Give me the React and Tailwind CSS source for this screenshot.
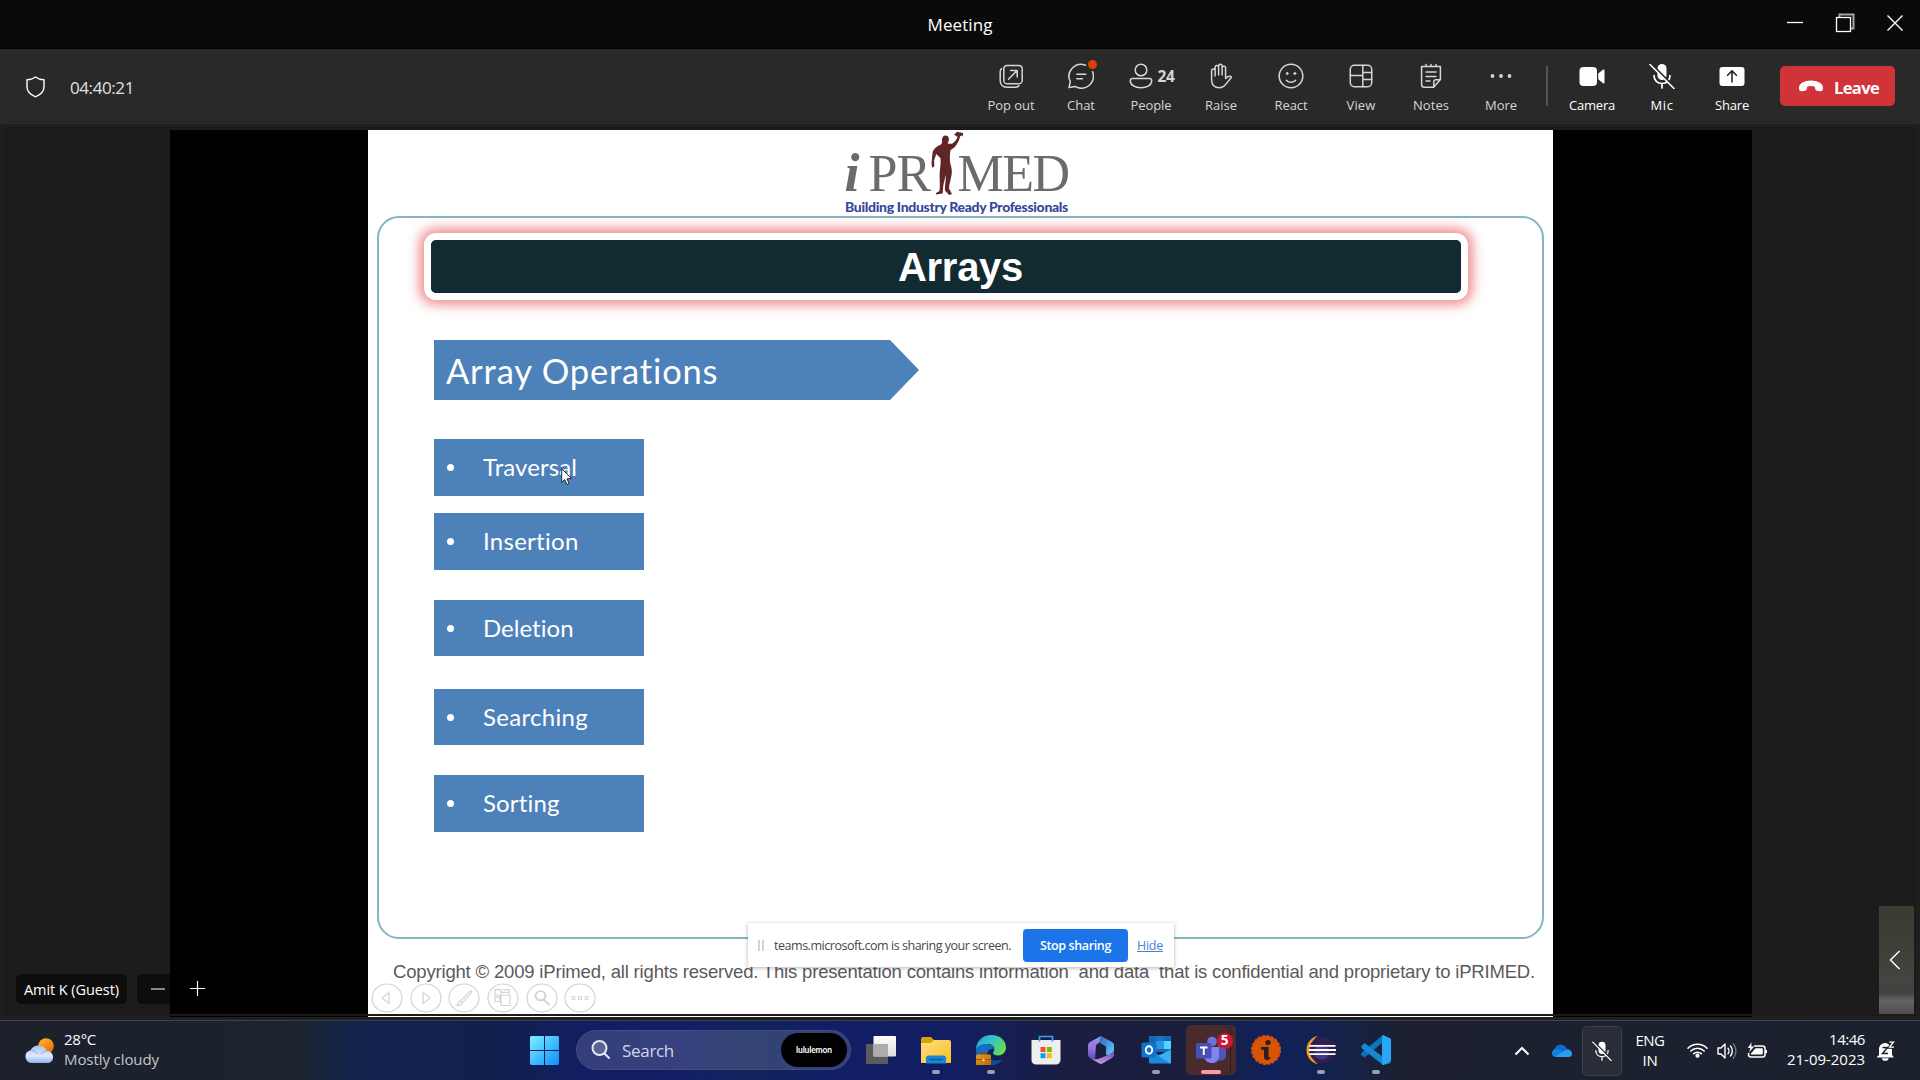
import React, { useLayoutEffect, useRef, useState } from "react";

/* Text whose letter spacing is adjusted so that the line takes `w` pixels. */
function Fit({ w, className = "", children }) {
  const ref = useRef(null);
  const [spacing, setSpacing] = useState(0);
  useLayoutEffect(() => {
    const natural = ref.current.getBoundingClientRect().width;
    setSpacing((w - natural) / children.length);
  }, [w, children]);
  return (
    <span ref={ref} className={`inline-block whitespace-pre ${className}`} style={{ letterSpacing: `${spacing}px` }}>
      {children}
    </span>
  );
}

const Line = ({ size = 26, width = 1.5, children, vb = "0 0 26 26" }) => (
  <svg width={size} height={size} viewBox={vb} fill="none" stroke="currentColor" strokeWidth={width} strokeLinecap="round" strokeLinejoin="round">
    {children}
  </svg>
);

const icons = {
  popout: (
    <Line>
      <rect x="5.800" y="2.400" width="18.400" height="18.400" rx="3.400" />
      <path d="M3.600 5.600C2.600 6.300 2.200 7.400 2.200 8.600v9c0 4 2.600 6.600 6.600 6.600h9c1.300 0 2.400-.5 3.100-1.500M10.500 16.200l8.300-8.400M12.600 7.400h6.600v6.600" />
    </Line>
  ),
  chat: (
    <Line>
      <path d="M17.500 2.200A12 12 0 0 0 2.300 18.700L1 24.600l6-1.200A12 12 0 0 0 24.600 8.800M8.800 11.200h9M8.800 15.800h5.600" />
    </Line>
  ),
  raise: (
    <Line>
      <path d="M3.600 17V7.700a1.750 1.750 0 0 1 3.500 0V13M7.100 12V4.200a1.750 1.750 0 0 1 3.500 0V12M10.600 11V3a1.750 1.750 0 0 1 3.500 0v9M14.100 12V5a1.750 1.750 0 0 1 3.500 0v10.600c1.300-1.700 2.900-2.600 4.400-2.400 1.100.2 1.600 1 .9 1.800l-5.400 6.600c-1.700 2.200-3.300 3.200-6 3.200-5 0-7.900-2.800-7.900-7.800" />
    </Line>
  ),
  react: (
    <Line>
      <circle cx="13" cy="13" r="11.800" />
      <path d="M8.400 17.200c2.500 2.800 6.700 2.800 9.200 0" />
      <circle cx="9.200" cy="10.500" r="1" fill="currentColor" strokeWidth="1" />
      <circle cx="16.800" cy="10.500" r="1" fill="currentColor" strokeWidth="1" />
    </Line>
  ),
  view: (
    <Line>
      <rect x="2.300" y="2.300" width="21.400" height="21.400" rx="4" />
      <path d="M14.800 2.300v21.400M2.300 12.500h12.500M14.800 9.500h8.900M14.800 16.500h8.900" />
    </Line>
  ),
  notes: (
    <Line>
      <path d="M3.600 3.600h18.800v13l-6.800 7.600H6.400a2.800 2.800 0 0 1-2.800-2.800zM22.400 16.800h-4.600a2 2 0 0 0-2 2v5.200M8 1.500v2M13 1.500v2M18 1.500v2M8 9h10M8 13.500h10M8 18h4" />
    </Line>
  ),
  more: (
    <Line>
      <g fill="currentColor" stroke="none">
        <circle cx="4.500" cy="13" r="1.900" />
        <circle cx="13" cy="13" r="1.900" />
        <circle cx="21.500" cy="13" r="1.900" />
      </g>
    </Line>
  ),
  camera: (
    <Line>
      <g fill="currentColor" stroke="none">
        <rect x="0.500" y="4" width="17.500" height="19" rx="4" />
        <path d="M19.200 10.500l4.600-3.800c.8-.6 1.700-.2 1.700.7v12c0 .9-.9 1.300-1.700.7l-4.600-3.800z" />
      </g>
    </Line>
  ),
  share: (
    <Line>
      <rect x="0.500" y="4" width="25" height="19" rx="3" fill="currentColor" stroke="none" />
      <path d="M13 19V8.200M8.600 12.300L13 7.900l4.400 4.400" stroke="#292929" strokeWidth="1.600" />
    </Line>
  ),
};

function MicOff({ size = 26, bg = "#292929" }) {
  return (
    <svg width={size} height={size} viewBox="0 0 26 26" fill="none" strokeLinecap="round">
      <rect x="8.500" y="1" width="9" height="16" rx="4.500" fill="white" />
      <path d="M5 12.500c0 5 3.500 8 8 8s8-3 8-8M13 20.500V25" stroke="white" strokeWidth="1.700" />
      <path d="M2 .5L26 24.500" stroke={bg} strokeWidth="1.800" />
      <path d="M1 1.500L25 25.500" stroke="white" strokeWidth="1.600" />
    </svg>
  );
}

function Tool({ icon, label, w, bright }) {
  return (
    <div className={`flex w-[70px] flex-col items-center pt-[14px] ${bright ? "text-white" : "text-[#d6d6d6]"}`}>
      <div className="h-[26px]">{icon}</div>
      <div className="mt-[7px] h-[18px] text-[13px] leading-[18px]">
        <Fit w={w}>{label}</Fit>
      </div>
    </div>
  );
}

function TitleBar() {
  return (
    <header className="grid h-[49px] grid-cols-[1fr_auto_1fr] border-b border-black bg-[#0a0a0a] text-white">
      <div />
      <div className="pt-[12px] text-[17px] leading-[25px]">
        <Fit w={65}>Meeting</Fit>
      </div>
      <div className="flex justify-end pr-[16px] pt-[13px]">
        <svg className="mr-[31px]" width="18" height="20" fill="none" stroke="white" strokeWidth="1.300"><path d="M1 9.500h16" /></svg>
        <svg className="mr-[31px]" width="20" height="20" fill="none" stroke="white" strokeWidth="1.300">
          <path d="M4.500 4V1.500h14v14H16" stroke="#a8a8a8" strokeWidth="2" />
          <rect x="1.500" y="4.500" width="14" height="14" />
        </svg>
        <svg width="18" height="20" fill="none" stroke="white" strokeWidth="1.400"><path d="M1.500 2.500l15 15M16.500 2.500l-15 15" /></svg>
      </div>
    </header>
  );
}

function Toolbar() {
  return (
    <div className="flex h-[75px] bg-[#292929]">
      <div className="flex flex-1 items-start pl-[26px]">
        <svg className="mt-[27px]" width="20" height="22" viewBox="0 0 20 22" fill="none" stroke="white" strokeWidth="1.400" strokeLinejoin="round">
          <path d="M9.500 1c2.400 1.800 5 2.700 8.500 2.800v7c0 5-3.400 8-8.500 10C4.400 18.800 1 15.800 1 10.800v-7C4.500 3.700 7.100 2.800 9.500 1z" />
        </svg>
        <div className="ml-[24px] mt-[26px] text-[17px] leading-[25px] text-[#e0e0e0]">
          <Fit w={64}>04:40:21</Fit>
        </div>
      </div>
      <Tool label="Pop out" w={47} icon={icons.popout} />
      <Tool
        label="Chat"
        w={28}
        icon={
          <div className="relative">
            {icons.chat}
            <span className="absolute -right-[3px] -top-[3px] size-[9px] rounded-full bg-[#dc3e04]" />
          </div>
        }
      />
      <Tool
        label="People"
        w={41}
        icon={
          <div className="flex items-center gap-[4px]">
            <Line>
              <circle cx="13" cy="7" r="5.800" />
              <path d="M4.500 15.500h17c1.300 0 2.200.9 2.200 2.200 0 4.500-4.700 7-10.700 7s-10.700-2.500-10.700-7c0-1.300.9-2.200 2.200-2.200z" />
            </Line>
            <span className="text-[15.500px] font-bold leading-[26px]"><Fit w={17}>24</Fit></span>
          </div>
        }
      />
      <Tool label="Raise" w={32} icon={icons.raise} />
      <Tool label="React" w={33} icon={icons.react} />
      <Tool label="View" w={29} icon={icons.view} />
      <Tool label="Notes" w={36} icon={icons.notes} />
      <Tool label="More" w={32} icon={icons.more} />
      <div className="ml-[10px] mr-[9px] mt-[17px] h-[40px] w-[2px] bg-[#555555]" />
      <Tool bright label="Camera" w={46} icon={icons.camera} />
      <Tool bright label="Mic" w={23} icon={<MicOff />} />
      <Tool bright label="Share" w={34} icon={icons.share} />
      <button className="ml-[13px] mr-[25px] mt-[17px] flex h-[40px] w-[115px] items-center gap-[10px] rounded-[5px] bg-[#d13438] pl-[18px] text-[16.500px] font-bold text-white">
        <svg width="26" height="12" viewBox="0 0 26 12">
          <path d="M13 .5c6.500 0 12 2.800 12 7.500 0 2.400-1 3.600-3.200 3.200l-2.700-.5c-1.300-.3-1.900-1-2-2.200l-.2-1.800c-2.500-.8-5.300-.8-7.800 0l-.2 1.800c-.1 1.200-.7 1.900-2 2.200l-2.700.5C2 11.600 1 10.400 1 8 1 3.300 6.500.5 13 .5z" fill="white" />
        </svg>
        <Fit w={45} className="mt-[4px]">Leave</Fit>
      </button>
    </div>
  );
}

function Logo() {
  return (
    <div className="flex h-[86px] flex-col items-center pr-[8px]">
      <div className="flex h-[68px] w-[224px] items-end font-[Liberation_Serif,serif] text-[52px] leading-[49px] text-[#6c6b6c]">
        <span className="w-[24px] text-[54px] font-bold italic">
          <Fit w={17}>i</Fit>
        </span>
        <Fit w={62}>PR</Fit>
        <svg width="32" height="66" viewBox="0 0 32 63" preserveAspectRatio="none" className="relative z-10 mb-[1px] shrink-0" fill="#602626">
          <path d="M11 8.500c0-2.700 1.300-4.300 3.500-4.300s3.600 1.600 3.400 4c-.1 1.500-.6 2.600-1.400 3.500 1.500.6 3.500.8 5 .3 2.400-1.700 4.300-4 5-6.500l-3.400-2L26 .8l6 1.200 1 2.500-.6 2-1-2.200-2.200.4c-.8 4-3.200 8.100-5.700 10.700-1.600 1.200-3.300 2-4.100 3.200-.6 4-.8 8.500-.1 12.500 1.200 3.500 2 7 1.200 11-.6 4.200-2.300 8.500-2.500 12.800l3 5.300-2.900.8-4.200-4.300c-.2-5 1.200-10 .9-14.600l-2.200 8.500c-.7 3.500-.5 6-.9 9l-6.500 1-.4-1.200 3.600-2.200c1-6-.1-12 .3-17.500.3-5 1.400-9 .7-14L5.300 22l-2.200 6 .2 6-2 1L.5 31l1-10c.8-3.500 4-6.500 8.500-8 .9-.9 1.300-2.800 1-4.500z" />
        </svg>
        <Fit w={111} className="-ml-[5px]">MED</Fit>
      </div>
      <div className="font-[Lato,sans-serif] text-[14px] font-black leading-[17px] text-[#38479a]">
        <Fit w={223}>Building Industry Ready Professionals</Fit>
      </div>
    </div>
  );
}

function Item({ label, w, className }) {
  return (
    <li className={`flex w-[210px] items-center bg-[#4d81ba] pl-[13px] text-[24px] leading-[30px] text-white ${className}`}>
      <span className="size-[7px] rounded-full bg-white" />
      <Fit w={w} className="-mt-[1px] ml-[29px]">{label}</Fit>
    </li>
  );
}

const controls = [
  <path key="a" d="M18 10l-7 6 7 6z" />,
  <path key="b" d="M13 10l7 6-7 6z" />,
  <path key="c" d="M8.500 23.500c2-.4 1.500-3.500 4-4.500l10-11 1.500 1.500-9.500 11.500c-.5 2.500-3.500 3.500-6 2.500zM12.500 19l2 2" />,
  <path key="d" d="M8 7h6v6H8zM16 7h6v5M8 15h5v5H8zM14 13h9v11h-9zM14 10h8" />,
  <path key="e" d="M14.500 8.500a5 5 0 1 0 .1 0zM18 18l5.500 5.500" strokeWidth="1.800" />,
  <path key="f" d="M8 14.500v3h3v-3zM14.500 14.500v3h3v-3zM21 14.500v3h3v-3z" strokeWidth="1" />,
];

function Slide() {
  return (
    <div className="relative ml-[198px] flex w-[1185px] flex-col bg-white">
      <Logo />
      <section className="mx-[9px] h-[723px] rounded-[22px] border-2 border-[#83b6c1] px-[45px] pt-[15px]">
        <div className="h-[67px] w-[1044px] rounded-[12px] border-[7px] border-white bg-[#112b31] shadow-[0_0_12px_5px_rgba(236,125,125,0.85)]">
          <div className="flex h-full items-center justify-center rounded-[6px] bg-[#112b31] pl-[29px] font-[Liberation_Sans,sans-serif] text-[40px] font-bold leading-none text-white">
            <Fit w={125}>Arrays</Fit>
          </div>
        </div>
        <div className="ml-[10px] mt-[40px] flex h-[60px] w-[485px] items-center bg-[#4d81ba] pl-[12px] font-[Lato,sans-serif] text-[34.500px] text-white [clip-path:polygon(0_0,456px_0,100%_50%,456px_100%,0_100%)]">
          <Fit w={273} className="mt-[1px]">Array Operations</Fit>
        </div>
        <ul className="ml-[10px] mt-[39px] font-[Lato,sans-serif]">
          <Item label="Traversal" w={94} className="h-[57px]" />
          <Item label="Insertion" w={96} className="mt-[17px] h-[57px]" />
          <Item label="Deletion" w={91} className="mt-[30px] h-[56px]" />
          <Item label="Searching" w={105} className="mt-[33px] h-[56px]" />
          <Item label="Sorting" w={77} className="mt-[30px] h-[57px]" />
        </ul>
      </section>
      <div className="ml-[25px] mt-[20px] h-[25px] font-[Liberation_Sans,sans-serif] text-[18.500px] leading-[25px] text-[#5a5a5c]">
        <Fit w={1142}>{"Copyright © 2009 iPrimed, all rights reserved. This presentation contains information  and data  that is confidential and proprietary to iPRIMED."}</Fit>
      </div>
      <div className="ml-[3px] -mt-[1px] flex gap-[6.700px]">
        {controls.map((c, i) => (
          <svg key={i} width="32" height="30" viewBox="0 0 32 32" preserveAspectRatio="none" fill="none" stroke="#d2d2d2" strokeWidth="1.200">
            <circle cx="16" cy="16" r="15" />
            {c}
          </svg>
        ))}
      </div>

      {/* mouse pointer of the presenter */}
      <svg className="absolute left-[193px] top-[338px]" width="12" height="18" viewBox="0 0 12 18">
        <path d="M.7.8v13.500l3-2.700 2.200 5 2.200-1-2.100-4.800 4.600-.3z" fill="white" stroke="#1b2a3d" strokeWidth="1" />
      </svg>

      {/* browser notice floating over the slide */}
      <div className="absolute left-[380px] top-[793px] flex h-[44px] w-[426px] items-center bg-white pt-[1px] font-[Open_Sans,sans-serif] text-[12.500px] shadow-[0_1px_4px_rgba(0,0,0,0.3)]">
        <div className="ml-[10px] h-[11px] w-[6px] border-x-2 border-[#d4d4d4]" />
        <Fit w={237} className="ml-[10px] mt-[1px] text-[#45484c]">teams.microsoft.com is sharing your screen.</Fit>
        <button className="ml-[12px] h-[33px] w-[105px] rounded-[4px] bg-[#1b74e8] pt-[1px] font-semibold text-white">
          <Fit w={71}>Stop sharing</Fit>
        </button>
        <Fit w={26} className="ml-[9px] mt-[1px] text-[#4a7fd0] underline">Hide</Fit>
      </div>
    </div>
  );
}

function Stage() {
  return (
    <main className="relative h-[896px] bg-[#1f1f1f] pt-[3px]">
      <div className="mx-[4px] flex h-[889px] border border-[#191919] bg-[#1c1c1c] pl-[165px] pt-[2px]">
        <div className="flex h-[884px] w-[1582px] bg-black">
          <Slide />
        </div>
      </div>
      <div className="absolute bottom-[3px] left-[170px] flex h-px w-[1582px] bg-black">
        <div className="ml-[198px] w-[1185px] bg-white" />
      </div>

      {/* name tag and zoom controls */}
      <div className="absolute left-[16px] top-[850px] flex h-[30px] items-center text-[14.500px] font-medium text-white">
        <div className="flex h-full w-[111px] items-center justify-center rounded-[5px] bg-[#0d0d0d] pt-[1px]">
          <Fit w={95}>Amit K (Guest)</Fit>
        </div>
        <div className="ml-[10px] flex h-full w-[33px] items-center rounded-l-[5px] bg-[#0d0d0d] pl-[14px]">
          <div className="h-[2px] w-[14px] bg-[#878787]" />
        </div>
        <svg className="-mt-[1px] ml-[20px]" width="15" height="15" stroke="white" strokeWidth="1.200"><path d="M7.500 0v15M0 7.500h15" /></svg>
      </div>

      {/* own video, folded away */}
      <div className="absolute left-[1879px] top-[782px] flex h-[108px] w-[35px] items-center justify-start bg-[linear-gradient(180deg,#393c31_0%,#3d3f38_35%,#444440_65%,#434241_80%,#656364_88%,#5a585a_94%,#4c4b52_100%)] pl-[10px]">
        <svg width="12" height="20" fill="none" stroke="white" strokeWidth="1.500"><path d="M10.500 1L1.500 10l9 9" /></svg>
      </div>
    </main>
  );
}

function AppSlot({ children, dot, className = "" }) {
  return (
    <div className={`flex h-[50px] w-[55px] flex-col items-center ${className}`}>
      <div className="flex h-[50px] items-center">{children}</div>
      <div className={`-mt-[5px] h-[4px] shrink-0 rounded-full ${dot === "active" ? "w-[20px] bg-[#ff99a4]" : dot ? "w-[8px] bg-[#9a9db2]" : "w-0"}`} />
    </div>
  );
}

const Svg = ({ children, vb = "0 0 30 30" }) => (
  <svg width="30" height="30" viewBox={vb}>{children}</svg>
);

function Apps() {
  return (
    <div className="flex pt-[4px]">
      <AppSlot>
        <Svg>
          <defs>
            <linearGradient id="tvA" x1="0" y1="0" x2="0" y2="1"><stop offset="0" stopColor="#fff" /><stop offset="1" stopColor="#dcdcdc" /></linearGradient>
          </defs>
          <rect x="0" y="9" width="22" height="20" rx="1" fill="#5b5b5b" />
          <rect x="7.500" y="1" width="22.500" height="20.500" rx="1" fill="url(#tvA)" />
          <path d="M7.500 9H22v12.500H7.500z" fill="#acacac" />
        </Svg>
      </AppSlot>
      <AppSlot dot>
        <Svg>
          <defs>
            <linearGradient id="fxA" x1="0" y1="0" x2="1" y2="1"><stop offset="0" stopColor="#ffe083" /><stop offset="1" stopColor="#fbbd21" /></linearGradient>
          </defs>
          <path d="M0 4a2 2 0 0 1 2-2h8l3.500 3.500H20V12H0z" fill="#dd9f0c" />
          <path d="M0 8h10l3-3h15a2 2 0 0 1 2 2v21H0z" fill="url(#fxA)" />
          <path d="M5 28.500V23a2.500 2.500 0 0 1 2.500-2.500h15A2.500 2.500 0 0 1 25 23v5.500z" fill="#1787d4" />
          <path d="M9 24.500h12" stroke="#0b5a9c" strokeWidth="1.400" strokeLinecap="round" />
        </Svg>
      </AppSlot>
      <AppSlot dot>
        <Svg>
          <defs>
            <linearGradient id="edA" x1="0" y1="0.200" x2="1" y2="0.600"><stop offset="0" stopColor="#2aa7dc" /><stop offset="0.500" stopColor="#35c4c4" /><stop offset="1" stopColor="#66e04c" /></linearGradient>
            <linearGradient id="bgA" x1="0" y1="0" x2="1" y2="1"><stop offset="0" stopColor="#e69b24" /><stop offset="1" stopColor="#b96a05" /></linearGradient>
          </defs>
          <path d="M0 15C0 6 7 0 15.500 0 24 0 30 5.500 30 12.500c0 5-3.800 8-8 8-3 0-5-1-5-2.500 0-1 1.300-1.500 1.300-4 0-3-3-5-7-5C5.500 9 1.500 11.500 0 15z" fill="url(#edA)" />
          <path d="M0 15c1.500-3.700 5-6 10-6 4.500 0 8 2.300 8.300 5-4-1.500-8 2-7 7 1 5.500 7 8.500 15 3.500-3 4-7 5.500-11.300 5.500C6 30 0 23.500 0 15z" fill="#1271c6" />
          <path d="M12 17c-1.500 6 6 11 14.500 7l-3 3.500c-3 2.300-7 2.500-9 2.500z" fill="#0c4d93" />
          <rect x="0" y="19.500" width="15" height="10.500" rx="1" fill="url(#bgA)" />
          <path d="M5 19.500V18h5v1.500" stroke="#8d4c03" strokeWidth="1.400" fill="none" />
          <path d="M0 24.500h15" stroke="#8d4c03" strokeWidth=".8" />
          <circle cx="7.500" cy="25" r="1.200" fill="#ffe08a" />
        </Svg>
      </AppSlot>
      <AppSlot>
        <Svg>
          <path d="M8.500 6.500V1.500h13v5" fill="none" stroke="#29a8ea" strokeWidth="1.700" />
          <path d="M.5 5h29v20a4.500 4.500 0 0 1-4.500 4.500H5A4.500 4.500 0 0 1 .5 25z" fill="#eeeeee" />
          <path d="M8.500 6.500V5M21.500 6.500V5" stroke="#29a8ea" strokeWidth="1.700" />
          <path d="M9.500 12h5v5h-5z" fill="#f25022" />
          <path d="M15.800 12h5v5h-5z" fill="#7fba00" />
          <path d="M9.500 18.200h5v5h-5z" fill="#00a4ef" />
          <path d="M15.800 18.200h5v5h-5z" fill="#ffb900" />
        </Svg>
      </AppSlot>
      <AppSlot>
        <Svg>
          <defs>
            <linearGradient id="mA" x1="0" y1="0" x2="0" y2="1"><stop offset="0" stopColor="#7f9fee" /><stop offset="0.500" stopColor="#a06fdc" /><stop offset="1" stopColor="#3f4fb5" /></linearGradient>
            <linearGradient id="mB" x1="0" y1="0" x2="1" y2="1"><stop offset="0" stopColor="#305fc4" /><stop offset="1" stopColor="#5fd8f8" /></linearGradient>
            <linearGradient id="mC" x1="0" y1="1" x2="1" y2="0"><stop offset="0" stopColor="#d9a4f2" /><stop offset="1" stopColor="#6c4bb0" /></linearGradient>
          </defs>
          <path d="M15 1L4 7c-1.300.8-2 2-2 3.500v9C2 21 2.700 22.300 4 23l5 2.500L10 10l6-4.500z" fill="url(#mA)" />
          <path d="M15 1c-1.500 3-2 5.500 0 7.500l5 3v8l6 2c1.300-.8 2-2 2-3.500v-7.500C28 9 27.300 7.700 26 7z" fill="url(#mB)" />
          <path d="M4 23l9.500 5.500c1 .6 2 .6 3 0L26 23c1.300-.8 2-2 2-3.500V15c-1 3-6 5-12 7.500-5 2.300-9 2.500-12 .5z" fill="url(#mC)" />
          <path d="M15 9.500l5 3v6L15 21.500l-5-3v-6z" fill="#1a1f40" />
        </Svg>
      </AppSlot>
      <AppSlot dot>
        <Svg>
          <path d="M8 2a1 1 0 0 1 1-1h20a1 1 0 0 1 1 1v15H8z" fill="#1467b5" />
          <path d="M15 6h8v8h-8z" fill="#2997dc" />
          <path d="M23 6h7v8h-7z" fill="#50d5ff" />
          <path d="M15 1h8v5h-8z" fill="#1a73c2" />
          <path d="M8 13l11 8 11-8v14a1.500 1.500 0 0 1-1.500 1.500h-19A1.500 1.500 0 0 1 8 27z" fill="#1b8ad8" />
          <path d="M30 15v12a1.500 1.500 0 0 1-1.500 1.500L17 20.500z" fill="#3aaef0" />
          <rect x="0.500" y="7.500" width="15" height="15" rx="1.500" fill="#0f74cf" />
          <ellipse cx="8" cy="15" rx="3.200" ry="3.700" fill="none" stroke="white" strokeWidth="1.900" />
        </Svg>
      </AppSlot>
      <div className="relative flex w-[55px] justify-center">
        <div className="absolute left-[3px] top-0 h-[50px] w-[50px] rounded-[5px] bg-[#4a2a2d]" />
        <div className="absolute left-[3px] top-0 h-[50px] w-[45px] rounded-[5px] border-r border-[#2b1c26]" />
        <div className="relative">
          <AppSlot dot="active">
            <div className="relative">
              <Svg>
                <circle cx="16" cy="6.500" r="4.800" fill="#6d73d8" />
                <circle cx="25" cy="9" r="3.400" fill="#4b51b8" />
                <path d="M21 12h9v8c0 3.500-2 5.500-5 5.500h-4z" fill="#4e55bf" />
                <path d="M8 12h15v8.500c0 5-3 7.500-7 7.500s-8-2.500-8-7.500z" fill="#7d85ee" />
                <rect x="0" y="8" width="15.500" height="15.500" rx="1.500" fill="#484fb5" />
                <path d="M4 12.500h7.500M7.750 12.500v7.500" stroke="white" strokeWidth="1.900" />
              </Svg>
              <span className="absolute -right-[7px] -top-[2px] flex size-[16px] items-center justify-center rounded-full bg-[#cd1637] text-[13.500px] font-bold leading-none text-white">5</span>
            </div>
          </AppSlot>
        </div>
      </div>
      <AppSlot>
        <Svg>
          <circle cx="15" cy="15" r="14" fill="#d75404" />
          <circle cx="15" cy="15" r="14" fill="none" stroke="#d75404" strokeWidth="2" strokeDasharray="3 1.400" />
          <circle cx="17" cy="7.500" r="2.600" fill="#2d1d22" />
          <path d="M10 12h7.500v9.500c0 1.200.8 1.200 2 .5v1.500c-2.500 2.300-6.500 2-6.500-1.500v-7l-3-.5z" fill="#2d1d22" />
        </Svg>
      </AppSlot>
      <AppSlot dot>
        <Svg>
          <path d="M12 .8A14.500 14.500 0 0 0 12 29.200 17 17 0 0 1 12 .8z" fill="#f29422" />
          <circle cx="16.500" cy="15" r="13.200" fill="#2e2150" />
          <circle cx="15.500" cy="17" r="7.500" fill="#473787" />
          <path d="M3.300 10.800h26.200M2.700 15h27.300M3.300 19.200h26.200" stroke="white" strokeWidth="1.800" />
        </Svg>
      </AppSlot>
      <AppSlot dot>
        <Svg>
          <path d="M22 0l-1 8L3.500 22.500 0 19.800v-1.600z" fill="#0a74be" />
          <path d="M0 11.500L3.500 8 30 28l-8 2L1 13.500z" fill="#1787cf" />
          <path d="M22 0l7 3.200c.6.300 1 .8 1 1.500v20.600c0 .7-.4 1.200-1 1.500L22 30c-.6-.2-1-.6-1-1V1c0-.4.400-.8 1-1z" fill="#29a7f5" />
        </Svg>
      </AppSlot>
    </div>
  );
}

function Tray() {
  return (
    <div className="flex flex-1 items-center justify-end text-[15px] leading-[20px] text-white">
      <svg width="16" height="10" fill="none" stroke="white" strokeWidth="2"><path d="M1.500 8.500L8 2l6.500 6.500" /></svg>
      <svg className="ml-[22px]" width="20" height="14" viewBox="0 0 20 14">
        <path d="M4.500 12.500A4 4 0 0 1 2.500 5 6.500 6.500 0 0 1 14.500 4.500c3 .2 5 2 5 4z" fill="#0b6fcf" />
        <path d="M0 9.500C0 7 2 5 4.500 5c2 0 3.500 1 6 2.500L17 13H4C1.500 13 0 11.500 0 9.500z" fill="#1481dc" />
        <path d="M3 12.900L12 7c3-2 8-.5 8 3 0 2-1.500 3-3.500 3H4z" fill="#29a0ee" />
      </svg>
      <div className="ml-[10px] flex h-[50px] w-[40px] items-center justify-center rounded-[5px] border border-[#3b4049] bg-[#282d38]">
        <MicOff size={20} bg="#282d38" />
      </div>
      <div className="-mt-[2px] ml-[13px] flex w-[30px] flex-col items-center">
        <Fit w={29}>ENG</Fit>
        <Fit w={15}>IN</Fit>
      </div>
      <svg className="ml-[22px] mt-[-2px]" width="21" height="16" fill="none" stroke="white" strokeWidth="1.600" strokeLinecap="round">
        <path d="M1 6.200c5.300-5.300 13.700-5.300 19 0M3.800 9c3.700-3.700 9.700-3.700 13.400 0M6.700 11.700c2.100-2 5.500-2 7.600 0" />
        <circle cx="10.500" cy="13.700" r="1.300" fill="white" />
      </svg>
      <svg className="ml-[9px]" width="21" height="18" fill="none" stroke="white" strokeWidth="1.400" strokeLinejoin="round" strokeLinecap="round">
        <path d="M1 6v6h3l4 4V2L4 6zM11 6.200c1.300 1.500 1.300 4.100 0 5.600M13.500 4c2.400 2.800 2.400 7.200 0 10" />
        <path d="M16.300 1.800c3.500 4 3.500 10.400 0 14.400" stroke="#6f747d" />
      </svg>
      <svg className="ml-[9px]" width="21" height="18" viewBox="0 0 21 18" fill="none" stroke="white" strokeWidth="1.500">
        <path d="M7 4h8.500a2.500 2.500 0 0 1 2.500 2.500v6a2.500 2.500 0 0 1-2.500 2.500H4a2.500 2.500 0 0 1-2.500-2.500V11" />
        <path d="M8.500 6.300h6.500c.5 0 .8.300.8.800v4.700c0 .5-.3.800-.8.800H4.500c-.5 0-.8-.3-.8-.8z" fill="white" stroke="none" />
        <path d="M19 8v3.200" strokeWidth="2" />
        <path d="M4.500.3L.8 6h2.700L2 10.300 7.300 4.500H4.300z" fill="white" stroke="none" />
      </svg>
      <div className="-mt-[3px] ml-[19px] mr-[1px] flex w-[78px] flex-col items-end">
        <Fit w={36}>14:46</Fit>
        <Fit w={78}>21-09-2023</Fit>
      </div>
      <svg className="ml-[11px] mr-[25px]" width="18" height="20" viewBox="0 0 18 20">
        <path d="M2 14V8a6 6 0 0 1 9.500-4.800L15 8v6l1.500 1.800v.7H0v-.7z" fill="white" />
        <path d="M5 17.300h6.500a3.200 2.500 0 0 1-6.500 0z" fill="white" />
        <path d="M12.300 1.200h4.200l-4 5h4.500" fill="none" stroke="#1b222d" strokeWidth="3" />
        <path d="M12.300 1.200h4.200l-4 5h4.500" fill="none" stroke="white" strokeWidth="1.300" />
        <path d="M5.500 6.500h5l-5 6h5.500" fill="none" stroke="#1b222d" strokeWidth="1.500" />
      </svg>
    </div>
  );
}

function Taskbar() {
  return (
    <footer className="flex h-[60px] border-t border-[#3e424d] bg-[linear-gradient(90deg,#1c212c_0px,#1c232e_300px,#11234b_350px,#10214f_500px,#111e63_590px,#121f66_690px,#10245a_750px,#111e66_830px,#121e62_950px,#1b1e40_1070px,#1a1e3c_1180px,#10215a_1270px,#14214e_1330px,#1c2031_1400px,#1b222d_1920px)]">
      <div className="flex w-[530px] items-start pl-[24px] pt-[8px] text-[15px] leading-[20px]">
        <svg className="mt-[8px]" width="32" height="28" viewBox="0 0 32 28">
          <defs>
            <linearGradient id="sun" x1="0" y1="0" x2="0.600" y2="1"><stop offset="0" stopColor="#ffc024" /><stop offset="1" stopColor="#ee6a0d" /></linearGradient>
            <linearGradient id="cld" x1="0" y1="0" x2="0" y2="1"><stop offset="0" stopColor="#a8c3f5" /><stop offset="0.600" stopColor="#dfe9fb" /><stop offset="1" stopColor="#8fb0ee" /></linearGradient>
          </defs>
          <circle cx="22" cy="9" r="7.800" fill="url(#sun)" />
          <path d="M7.500 26a6.500 6.500 0 0 1-1-12.800A9 9 0 0 1 22.800 14 6.200 6.200 0 0 1 25 26z" fill="url(#cld)" />
          <path d="M6.500 13.200c3.500-.4 6 1.500 7 4M22.800 14c-3 0-5 1.200-6 3.200" fill="none" stroke="#8ca8e4" strokeWidth="1" />
        </svg>
        <div className="ml-[8px] flex flex-col items-start">
          <Fit w={32} className="text-white">28°C</Fit>
          <Fit w={95} className="text-[#c3c5c9]">Mostly cloudy</Fit>
        </div>
      </div>
      <svg className="mt-[15px]" width="29" height="29">
        <defs>
          <linearGradient id="win" gradientUnits="userSpaceOnUse" x1="0" y1="0" x2="29" y2="29"><stop offset="0" stopColor="#7df1ff" /><stop offset="1" stopColor="#0b8dfd" /></linearGradient>
        </defs>
        <path d="M1 0h13v14H0V1zM15 0h13l1 1v13H15zM0 15h14v14H1l-1-1zM15 15h14v13l-1 1H15z" fill="url(#win)" />
      </svg>
      <div className="ml-[17px] mt-[9px] flex h-[40px] w-[275px] items-center rounded-full border border-[#454d7f] bg-white/15 pl-[14px] pr-[3px]">
        <svg width="19" height="20" fill="none" stroke="#e4e6f0" strokeWidth="2" strokeLinecap="round">
          <circle cx="8.500" cy="8" r="7" fill="#5a6494" /><path d="M13.500 13.500l4.500 4.500" />
        </svg>
        <Fit w={52} className="ml-[12px] mt-[1px] text-[17px] text-[#d3d6e6]">Search</Fit>
        <div className="ml-auto flex h-[34px] w-[66px] items-center justify-center rounded-full bg-black font-[Lato,sans-serif] text-[8.500px] font-bold text-white">
          <Fit w={36}>lululemon</Fit>
        </div>
      </div>
      <div className="ml-[2px]">
        <Apps />
      </div>
      <Tray />
    </footer>
  );
}

export default function App() {
  return (
    <div className="flex h-[1080px] w-[1920px] flex-col overflow-hidden font-[Open_Sans,sans-serif]">
      <TitleBar />
      <Toolbar />
      <Stage />
      <Taskbar />
    </div>
  );
}
